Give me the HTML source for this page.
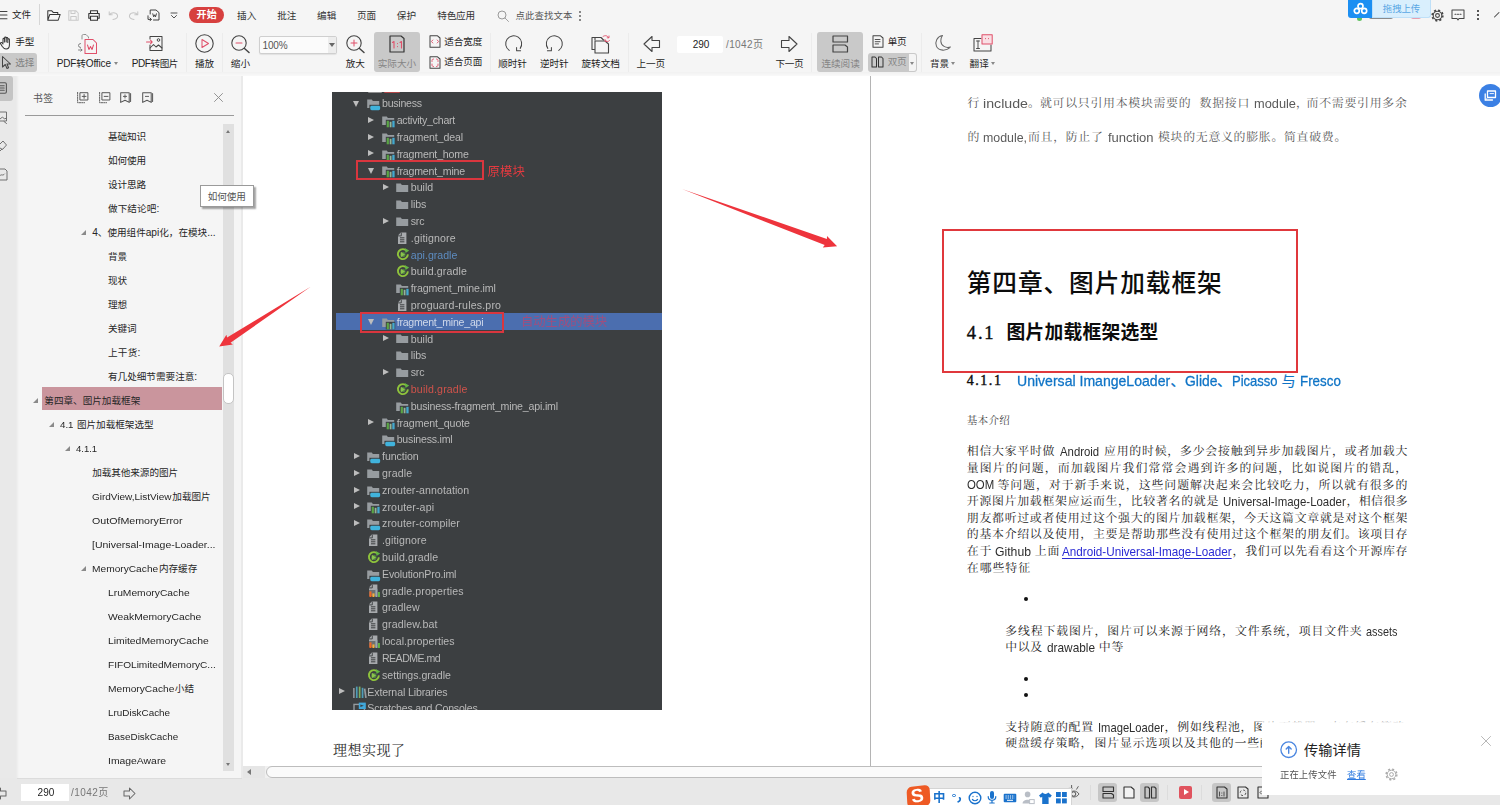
<!DOCTYPE html>
<html lang="zh-CN">
<head>
<meta charset="utf-8">
<title>Android PDF - 第四章、图片加载框架</title>
<style>
*{box-sizing:border-box;margin:0;padding:0;text-spacing-trim:space-all}
html,body{width:1500px;height:805px;overflow:hidden}
body{position:relative;background:#f5f5f5;font-family:"Liberation Sans","Noto Sans CJK SC",sans-serif;font-size:9.6px;color:#333}
.a{position:absolute;white-space:nowrap}
.t{position:absolute;white-space:nowrap;line-height:16px;height:16px}
svg{position:absolute;overflow:visible}
.tri{position:absolute;width:0;height:0;border-left:5px solid transparent;border-bottom:5px solid #8a8a8a}
.dn{position:absolute;width:0;height:0;border-left:2.5px solid transparent;border-right:2.5px solid transparent;border-top:3px solid #888}
.sep{position:absolute;width:1px;height:39px;top:33px;background:#ececec}
.ard{position:absolute;width:0;height:0;border-left:3.7px solid transparent;border-right:3.7px solid transparent;border-top:6.8px solid #bdbdbd}
.arr{position:absolute;width:0;height:0;border-top:3.6px solid transparent;border-bottom:3.6px solid transparent;border-left:6.6px solid #bdbdbd}
.ide{font-family:"Liberation Sans",sans-serif}
</style>
</head>
<body>
<div class="a" style="left:0;top:0;width:1500px;height:805px;filter:blur(.3px)">
<!-- ===== top menu row ===== -->
<div class="a" style="left:0px;top:0px;width:1500px;height:76px;background:#f5f5f5"></div>
<div class="a" style="left:0px;top:72px;width:1500px;height:4px;background:linear-gradient(#f1f1f1,#f9f9f9)"></div>
<svg style="left:0px;top:10px" width="8" height="12" viewBox="0 0 8 12"><path d="M0 1.4H7M0 5.1H7M0 8.8H7" fill="none" stroke="#444" stroke-width="1.01" stroke-linecap="round" stroke-linejoin="round"/></svg>
<div class="t" style="left:12px;top:7.3px;font-size:9.6px;color:#1e1e1e">文件</div>
<div class="a" style="left:39px;top:4px;width:1px;height:21px;background:#d6d6d6"></div>
<svg style="left:47px;top:10px" width="14" height="11" viewBox="0 0 14 11"><path d="M.8 10.2V.8H4.8L6.2 2.4H10.8V4.4M.8 10.2L2.8 4.4H13.2L11.2 10.2Z" fill="none" stroke="#333" stroke-width="1.01" stroke-linecap="round" stroke-linejoin="round"/></svg>
<svg style="left:68px;top:10px" width="11" height="11" viewBox="0 0 11 11"><path d="M.8 .8H8L10.2 3V10.2H.8ZM3 .8V3.6H7V.8M2.8 10.2V6.4H8.2V10.2" fill="none" stroke="#c9c9c9" stroke-width="1.01" stroke-linecap="round" stroke-linejoin="round"/></svg>
<svg style="left:88px;top:10px" width="12" height="11" viewBox="0 0 12 11"><path d="M2.5 3.5V.8H9.5V3.5M2.5 8.2H.8V3.5H11.2V8.2H9.5M2.5 6.2H9.5V10.2H2.5Z" fill="none" stroke="#333" stroke-width="1.1" stroke-linecap="round" stroke-linejoin="round"/></svg>
<svg style="left:108px;top:11px" width="11" height="9" viewBox="0 0 11 9"><path d="M1.2 .8V3.8H4.2M1.5 3.8C3 1.2 8 .8 9.5 4.2C10.2 6.6 8 8.4 5 8.4" fill="none" stroke="#c6c6c6" stroke-width="1.01" stroke-linecap="round" stroke-linejoin="round"/></svg>
<svg style="left:128px;top:11px" width="11" height="9" viewBox="0 0 11 9"><path d="M9.8 .8V3.8H6.8M9.5 3.8C8 1.2 3 .8 1.5 4.2C.8 6.6 3 8.4 6 8.4" fill="none" stroke="#c6c6c6" stroke-width="1.01" stroke-linecap="round" stroke-linejoin="round"/></svg>
<svg style="left:147px;top:9px" width="13" height="13" viewBox="0 0 13 13"><path d="M3.2 5V1H9L12 3.6V11H6.5M1 6.8V10.4H4M3 9L4.4 10.4L3 11.8M5.8 4.8L6.7 7.8L7.6 5.8L8.5 7.8L9.4 4.8" fill="none" stroke="#333" stroke-width="0.92" stroke-linecap="round" stroke-linejoin="round"/></svg>
<svg style="left:170px;top:12px" width="8" height="8" viewBox="0 0 8 8"><path d="M1 1H7M1.5 3.5L4 6L6.5 3.5" fill="none" stroke="#444" stroke-width="0.92" stroke-linecap="round" stroke-linejoin="round"/></svg>
<div class="a" style="left:189px;top:7px;width:35px;height:16px;border-radius:8px;background:#d7403f"></div>
<div class="t" style="left:196.6px;top:7.2px;font-size:10px;color:#fff;letter-spacing:0.1px;font-weight:bold">开始</div>
<div class="t" style="left:237px;top:8px;font-size:9.6px;color:#333;letter-spacing:0.06px">插入</div>
<div class="t" style="left:277.2px;top:8px;font-size:9.6px;color:#333">批注</div>
<div class="t" style="left:317.1px;top:8px;font-size:9.6px;color:#333">编辑</div>
<div class="t" style="left:357px;top:8px;font-size:9.6px;color:#333">页面</div>
<div class="t" style="left:396.8px;top:8px;font-size:9.6px;color:#333">保护</div>
<div class="t" style="left:437.2px;top:8px;font-size:9.6px;color:#333;letter-spacing:-0.14px">特色应用</div>
<svg style="left:497px;top:10px" width="13" height="13" viewBox="0 0 13 13"><circle cx="5" cy="5" r="4" fill="none" stroke="#999" stroke-width="1"/><path d="M8 8L11.5 11.5" fill="none" stroke="#999" stroke-width="0.92" stroke-linecap="round" stroke-linejoin="round"/></svg>
<div class="t" style="left:515.6px;top:8px;font-size:9.4px;color:#555;letter-spacing:0.09px">点此查找文本</div>
<div class="a" style="left:579px;top:11px;width:2px;height:2px;background:#888;box-shadow:0 4px 0 #888,0 8px 0 #888"></div>
<div class="a" style="left:1357px;top:16px;width:5px;height:5px;background:#5fc05f;border-radius:3px"></div>
<div class="a" style="left:1369px;top:15px;width:24px;height:4px;background:#8a8a8a;border-radius:2px"></div>
<div class="a" style="left:1411px;top:15px;width:10px;height:4px;background:#e7a0b0;border-radius:2px"></div>
<div class="a" style="left:1372px;top:0;width:59px;height:17.5px;background:#d9effd;border:1px solid #bfe0f8;border-top:0;border-radius:0 0 3px 0"></div>
<div class="t" style="left:1382.8px;top:0.6px;font-size:9.4px;color:#5aa7e4;letter-spacing:-0.03px">拖拽上传</div>
<div class="a" style="left:1348.2px;top:0;width:23.8px;height:18px;background:#1c8ff2;border-radius:0 0 0 3px"></div>
<svg style="left:1351.6px;top:1.8px" width="17" height="13" viewBox="0 0 17 13"><circle cx="8.5" cy="4.2" r="2.5" fill="none" stroke="#fff" stroke-width="1.7"/><circle cx="4.8" cy="8.8" r="2.5" fill="none" stroke="#fff" stroke-width="1.7"/><circle cx="12.2" cy="8.8" r="2.5" fill="none" stroke="#fff" stroke-width="1.7"/></svg>
<svg style="left:1431px;top:8.8px" width="13" height="13" viewBox="0 0 13 13"><circle cx="6.5" cy="6.5" r="1.9" fill="none" stroke="#444" stroke-width="1.1"/><circle cx="6.5" cy="6.5" r="4.3" fill="none" stroke="#444" stroke-width="1.1"/><circle cx="6.5" cy="6.5" r="5.4" fill="none" stroke="#444" stroke-width="1.5" stroke-dasharray="2.1 2.14"/></svg>
<svg style="left:1451px;top:9px" width="14" height="13" viewBox="0 0 14 13"><path d="M1 1H13V9.5H8L7 11L6 9.5H1Z" fill="none" stroke="#444" stroke-width="1.01" stroke-linecap="round" stroke-linejoin="round"/><path d="M4 5.3h1M6.5 5.3h1M9 5.3h1" fill="none" stroke="#444" stroke-width="1.1" stroke-linecap="round" stroke-linejoin="round"/></svg>
<div class="a" style="left:1477px;top:10px;width:2px;height:2px;background:#555;box-shadow:0 4px 0 #555,0 8px 0 #555"></div>
<svg style="left:1494px;top:12px" width="6" height="6" viewBox="0 0 6 6"><path d="M.5 5L5 .5" fill="none" stroke="#444" stroke-width="1.01" stroke-linecap="round" stroke-linejoin="round"/></svg>
<!-- ===== toolbar row ===== -->
<svg style="left:0px;top:36px" width="13" height="14" viewBox="0 0 13 14"><path d="M3 7V3.2C3 2 4.6 2 4.6 3.2V6M4.6 6V2C4.6 .8 6.2 .8 6.2 2V6M6.2 6V2.4C6.2 1.2 7.8 1.2 7.8 2.4V6.4M7.8 6.4V3.6C7.8 2.6 9.4 2.6 9.4 3.6V9C9.4 11.5 8 13 6 13C4 13 3.3 12 2.3 10.5L.6 7.8C0 6.8 1.4 6 2.2 7L3 8" fill="none" stroke="#333" stroke-width="1.01" stroke-linecap="round" stroke-linejoin="round"/></svg>
<div class="t" style="left:15.3px;top:34px;font-size:9.6px;color:#1e1e1e;letter-spacing:-0.09px">手型</div>
<div class="a" style="left:0px;top:53px;width:37px;height:19px;background:#c9c9c9;border-radius:0 3px 3px 0"></div>
<svg style="left:1px;top:55px" width="11" height="15" viewBox="0 0 11 15"><path d="M1.5 1.5V12L4.3 9.5L6 13.5L7.6 12.8L6 9H9.5Z" fill="none" stroke="#444" stroke-width="1.01" stroke-linecap="round" stroke-linejoin="round"/></svg>
<div class="t" style="left:15.3px;top:54.5px;font-size:9.6px;color:#828282;letter-spacing:-0.09px">选择</div>
<div class="sep" style="left:48px"></div>
<svg style="left:77px;top:34px" width="21" height="21" viewBox="0 0 21 21"><path d="M5 5V2C5 1 5.5 .5 6.5 .5H9L11.5 3V4" fill="none" stroke="#888" stroke-width="0.92" stroke-linecap="round" stroke-linejoin="round"/><path d="M3.5 9.5A2 2 0 1 0 3.5 13.5M1.5 16H5M3.8 14.8L5 16L3.8 17.2" fill="none" stroke="#777" stroke-width="0.92" stroke-linecap="round" stroke-linejoin="round"/><path d="M8 5.5H16L19.5 9V19.5H8Z" fill="none" stroke="#e0506a" stroke-width="1.01" stroke-linecap="round" stroke-linejoin="round"/><path d="M10.5 11L12 15.5L13.5 12.5L15 15.5L16.5 11" fill="none" stroke="#e0506a" stroke-width="1.01" stroke-linecap="round" stroke-linejoin="round"/></svg>
<div class="t" style="left:56.7px;top:55.7px;font-size:9.6px;color:#1e1e1e;letter-spacing:-0.14px"><span style="font-size:10px">PDF</span>转<span style="font-size:10px">Office</span></div>
<div class="dn" style="left:113.5px;top:62px"></div>
<svg style="left:146px;top:35px" width="18" height="17" viewBox="0 0 18 17"><path d="M4 4V1.5H16V15.5H4V10" fill="none" stroke="#444" stroke-width="1.01" stroke-linecap="round" stroke-linejoin="round"/><path d="M4 13L7.5 9.5L10 12L12.5 10L16 13" fill="none" stroke="#444" stroke-width="1.01" stroke-linecap="round" stroke-linejoin="round"/><circle cx="12.5" cy="5" r="1.3" fill="none" stroke="#444" stroke-width="1"/><path d="M.5 7H6M4.5 5.2L6.3 7L4.5 8.8" fill="none" stroke="#e0506a" stroke-width="1.01" stroke-linecap="round" stroke-linejoin="round"/></svg>
<div class="t" style="left:131.7px;top:55.7px;font-size:9.6px;color:#1e1e1e;letter-spacing:-0.41px"><span style="font-size:10px">PDF</span>转图片</div>
<div class="sep" style="left:186px"></div>
<svg style="left:195px;top:34px" width="19" height="19" viewBox="0 0 19 19"><circle cx="9.5" cy="9.5" r="8.7" fill="none" stroke="#444" stroke-width="1.1"/><path d="M7 5.5V13.5L13.5 9.5Z" fill="none" stroke="#e0506a" stroke-width="1.01" stroke-linecap="round" stroke-linejoin="round"/></svg>
<div class="t" style="left:195px;top:55.7px;font-size:9.6px;color:#1e1e1e;letter-spacing:-0.19px">播放</div>
<div class="sep" style="left:222px"></div>
<svg style="left:231px;top:35px" width="20" height="19" viewBox="0 0 20 19"><circle cx="8" cy="8" r="7.2" fill="none" stroke="#444" stroke-width="1.1"/><path d="M13.5 13.5L18 17.5" fill="none" stroke="#444" stroke-width="1.47" stroke-linecap="round" stroke-linejoin="round"/><path d="M5 8H11" fill="none" stroke="#e0506a" stroke-width="1.01" stroke-linecap="round" stroke-linejoin="round"/></svg>
<div class="t" style="left:230.8px;top:55.7px;font-size:9.6px;color:#1e1e1e">缩小</div>
<div class="a" style="left:259px;top:36px;width:78px;height:17.5px;background:#fbfbfb;border:1px solid #cfcfcf;border-radius:2px;box-shadow:0 1px 1px rgba(0,0,0,.08)"></div>
<div class="t" style="left:262.5px;top:37.6px;font-size:10px;color:#555;letter-spacing:-0.14px">100%</div>
<div class="a" style="left:327.5px;top:37px;width:8.5px;height:15.5px;background:#ededed"></div>
<div class="a" style="left:328.5px;top:43px;border-left:3px solid transparent;border-right:3px solid transparent;border-top:4px solid #666"></div>
<svg style="left:346px;top:35px" width="20" height="19" viewBox="0 0 20 19"><circle cx="8" cy="8" r="7.2" fill="none" stroke="#444" stroke-width="1.1"/><path d="M13.5 13.5L18 17.5" fill="none" stroke="#444" stroke-width="1.47" stroke-linecap="round" stroke-linejoin="round"/><path d="M5 8H11M8 5V11" fill="none" stroke="#e0506a" stroke-width="1.01" stroke-linecap="round" stroke-linejoin="round"/></svg>
<div class="t" style="left:345.7px;top:55.7px;font-size:9.6px;color:#1e1e1e;letter-spacing:-0.04px">放大</div>
<div class="a" style="left:374px;top:32px;width:46px;height:39.5px;background:#c9c9c9;border-radius:3px"></div>
<svg style="left:389px;top:35px" width="16" height="18" viewBox="0 0 16 18"><path d="M1 1H12L15 3.5V17H1Z" fill="none" stroke="#333" stroke-width="1.2" stroke-linecap="round" stroke-linejoin="round"/><path d="M3.5 7.5L5 6.5V13M11 7.5L12.5 6.5V13M8.5 8.5V8.6M8.5 11.5V11.6" fill="none" stroke="#e0506a" stroke-width="1.1" stroke-linecap="round" stroke-linejoin="round"/></svg>
<div class="t" style="left:377.8px;top:55.7px;font-size:9.6px;color:#858585;letter-spacing:-0.04px">实际大小</div>
<svg style="left:429px;top:35px" width="12" height="13" viewBox="0 0 12 13"><path d="M1 .8H8.5L11 3V12.2H1Z" fill="none" stroke="#444" stroke-width="1.01" stroke-linecap="round" stroke-linejoin="round"/><path d="M3.8 5L2.5 6.5L3.8 8M8.2 5L9.5 6.5L8.2 8" fill="none" stroke="#e0506a" stroke-width="0.92" stroke-linecap="round" stroke-linejoin="round"/></svg>
<div class="t" style="left:444.2px;top:33.5px;font-size:9.6px;color:#1e1e1e;letter-spacing:-0.09px">适合宽度</div>
<svg style="left:429px;top:56px" width="12" height="13" viewBox="0 0 12 13"><path d="M1 .8H8.5L11 3V12.2H1Z" fill="none" stroke="#444" stroke-width="1.01" stroke-linecap="round" stroke-linejoin="round"/><path d="M3 5.5V4.5C3 3.5 3.5 3 4.5 3M7.5 3C8.5 3 9 3.5 9 4.5V5.5M9 8V9C9 10 8.5 10.5 7.5 10.5M4.5 10.5C3.5 10.5 3 10 3 9V8" fill="none" stroke="#e0506a" stroke-width="0.92" stroke-linecap="round" stroke-linejoin="round"/></svg>
<div class="t" style="left:444.2px;top:54.3px;font-size:9.6px;color:#1e1e1e;letter-spacing:-0.09px">适合页面</div>
<div class="sep" style="left:490px"></div>
<svg style="left:503.6px;top:34.8px" width="19" height="19" viewBox="0 0 19 19"><path d="M5.2 15.4A8 8 0 1 1 16.2 13.4" fill="none" stroke="#444" stroke-width="1.01" stroke-linecap="round" stroke-linejoin="round"/><path d="M12.6 12.6V15.8H16.6" fill="none" stroke="#444" stroke-width="1.01" stroke-linecap="round" stroke-linejoin="round"/></svg>
<div class="t" style="left:498.3px;top:55.7px;font-size:9.6px;color:#1e1e1e;letter-spacing:-0.09px">顺时针</div>
<svg style="left:545px;top:34.8px" width="19" height="19" viewBox="0 0 19 19"><path d="M13.8 15.4A8 8 0 1 0 2.8 13.4" fill="none" stroke="#444" stroke-width="1.01" stroke-linecap="round" stroke-linejoin="round"/><path d="M6.4 12.6V15.8H2.4" fill="none" stroke="#444" stroke-width="1.01" stroke-linecap="round" stroke-linejoin="round"/></svg>
<div class="t" style="left:540px;top:55.7px;font-size:9.6px;color:#1e1e1e;letter-spacing:-0.13px">逆时针</div>
<svg style="left:591px;top:34px" width="20" height="20" viewBox="0 0 20 20"><path d="M4 6V3.5H10L12.5 6" fill="none" stroke="#444" stroke-width="1.1" stroke-linecap="round" stroke-linejoin="round"/><path d="M3.5 15.5H1V3.5H4" fill="none" stroke="#444" stroke-width="1.1" stroke-linecap="round" stroke-linejoin="round"/><path d="M4 7H14L17.5 10V19H4Z" fill="#f5f5f5" stroke="#444" stroke-width="1.1" stroke-linecap="round" stroke-linejoin="round"/><path d="M12 2.5C14 1 16.5 1.5 17.5 3.5M16.2 3.8H18V2M18.5 6.5C17.5 8 15.5 8 14.5 7M14 5.5V7.2H15.8" fill="none" stroke="#e0506a" stroke-width="0.92" stroke-linecap="round" stroke-linejoin="round"/></svg>
<div class="t" style="left:581.5px;top:55.7px;font-size:9.6px;color:#1e1e1e;letter-spacing:0.03px">旋转文档</div>
<div class="sep" style="left:628px"></div>
<svg style="left:643px;top:35px" width="18" height="18" viewBox="0 0 18 18"><path d="M1 9L9 1.5V5.5H16.5V12.5H9V16.5Z" fill="none" stroke="#444" stroke-width="1.1" stroke-linecap="round" stroke-linejoin="round"/></svg>
<div class="t" style="left:636.4px;top:55.7px;font-size:9.6px;color:#1e1e1e;letter-spacing:-0.06px">上一页</div>
<div class="a" style="left:677px;top:36px;width:46px;height:16.5px;background:#fff;border-radius:2px"></div>
<div class="t" style="left:692.8px;top:36.5px;font-size:10px;color:#222;letter-spacing:-0.1px">290</div>
<div class="t" style="left:726px;top:36.5px;font-size:10px;color:#777;letter-spacing:0.39px">/1042页</div>
<svg style="left:780px;top:35px" width="18" height="18" viewBox="0 0 18 18"><path d="M17 9L9 1.5V5.5H1.5V12.5H9V16.5Z" fill="none" stroke="#444" stroke-width="1.1" stroke-linecap="round" stroke-linejoin="round"/></svg>
<div class="t" style="left:775.5px;top:55.7px;font-size:9.6px;color:#1e1e1e;letter-spacing:-0.29px">下一页</div>
<div class="sep" style="left:811px"></div>
<div class="a" style="left:817px;top:32px;width:46px;height:39.5px;background:#c9c9c9;border-radius:3px"></div>
<svg style="left:832px;top:35px" width="17" height="18" viewBox="0 0 17 18"><path d="M1 1H15.5V7H1ZM1 10H13L15.5 12V17H1Z" fill="none" stroke="#444" stroke-width="1.2" stroke-linecap="round" stroke-linejoin="round"/></svg>
<div class="t" style="left:821.5px;top:55.7px;font-size:9.6px;color:#858585;letter-spacing:-0.04px">连续阅读</div>
<svg style="left:872px;top:35px" width="12" height="13" viewBox="0 0 12 13"><path d="M1 .8H8.5L11 3V12.2H1Z" fill="none" stroke="#444" stroke-width="1.01" stroke-linecap="round" stroke-linejoin="round"/><path d="M3.2 4.5H8M3.2 6.7H8M3.2 8.9H6.5" fill="none" stroke="#444" stroke-width="0.92" stroke-linecap="round" stroke-linejoin="round"/></svg>
<div class="t" style="left:887.7px;top:34px;font-size:9.6px;color:#1e1e1e;letter-spacing:-0.19px">单页</div>
<div class="a" style="left:868px;top:53px;width:49px;height:18.5px;background:#c9c9c9;border-radius:3px"></div>
<div class="a" style="left:908.5px;top:54px;width:7.5px;height:16.5px;background:#f4f4f4;border-radius:0 2px 2px 0"></div>
<div class="dn" style="left:910px;top:61.5px"></div>
<svg style="left:871px;top:56px" width="13" height="12" viewBox="0 0 13 12"><path d="M1 1H4L5.5 2.5V11H1ZM7.5 1H10.5L12 2.5V11H7.5Z" fill="none" stroke="#333" stroke-width="1.01" stroke-linecap="round" stroke-linejoin="round"/></svg>
<div class="t" style="left:887.7px;top:54.3px;font-size:9.6px;color:#858585;letter-spacing:-0.19px">双页</div>
<div class="sep" style="left:921px"></div>
<svg style="left:934px;top:34px" width="18" height="18" viewBox="0 0 18 18"><path d="M8.5 1.5C3 2.5 .5 8 2.5 12.5C5 17 12 17.5 16.5 13C12 14.5 7 12 6.8 7C6.7 4.5 7.5 2.8 8.5 1.5Z" fill="none" stroke="#666" stroke-width="1.01" stroke-linecap="round" stroke-linejoin="round"/></svg>
<div class="t" style="left:930px;top:55.7px;font-size:9.6px;color:#1e1e1e;letter-spacing:-0.19px">背景</div>
<div class="dn" style="left:951px;top:62px"></div>
<svg style="left:973px;top:34px" width="20" height="19" viewBox="0 0 20 19"><path d="M8 4.5H1V17H18V11" fill="none" stroke="#444" stroke-width="1.01" stroke-linecap="round" stroke-linejoin="round"/><path d="M3.5 7H6.5M5 7V14.5M3.5 14.5H6.5" fill="none" stroke="#444" stroke-width="0.92" stroke-linecap="round" stroke-linejoin="round"/><path d="M9 .8H19.2V10H9Z" fill="#f9dfe4" stroke="#e0506a" stroke-width="1.01" stroke-linecap="round" stroke-linejoin="round"/><path d="M12.5 4.5V4.6M15.5 4.5V4.6" fill="none" stroke="#e0506a" stroke-width="1.1" stroke-linecap="round" stroke-linejoin="round"/></svg>
<div class="t" style="left:969.6px;top:55.7px;font-size:9.6px;color:#1e1e1e;letter-spacing:-0.04px">翻译</div>
<div class="dn" style="left:991px;top:62px"></div>
<!-- ===== left strip + bookmark panel ===== -->
<div class="a" style="left:0px;top:76px;width:17px;height:702px;background:#e9e9e9"></div>
<div class="a" style="left:16px;top:76px;width:3px;height:702px;background:linear-gradient(90deg,#e9e9e9,#f5f5f5)"></div>
<div class="a" style="left:19px;top:76px;width:223px;height:702px;background:#f5f5f5"></div>
<div class="a" style="left:241px;top:76px;width:2px;height:702px;background:#eaeaea"></div>
<div class="a" style="left:0px;top:75.5px;width:13.4px;height:25.4px;background:#c4c4c4;border-radius:0 3px 3px 0"></div>
<svg style="left:0px;top:82px" width="8" height="12" viewBox="0 0 8 12"><path d="M0 .8H5C6 .8 6.4 1.2 6.4 2.2V9.8C6.4 10.8 6 11.2 5 11.2H0M0 3.8H4.2M0 6H4.2M0 8.2H4.2" fill="none" stroke="#555" stroke-width="1.1" stroke-linecap="round" stroke-linejoin="round"/></svg>
<svg style="left:0px;top:111px" width="8" height="13" viewBox="0 0 8 13"><path d="M0 1H6.5V10H0M0 8L2.5 6L4.5 8L6.5 7M4 10.5L6.5 12.5" fill="none" stroke="#666" stroke-width="0.92" stroke-linecap="round" stroke-linejoin="round"/></svg>
<svg style="left:0px;top:140px" width="8" height="12" viewBox="0 0 8 12"><path d="M0 4L3 1L6.5 5L2.5 9.5L0 8M0 11L2 9" fill="none" stroke="#666" stroke-width="0.92" stroke-linecap="round" stroke-linejoin="round"/></svg>
<svg style="left:0px;top:168px" width="8" height="13" viewBox="0 0 8 13"><path d="M0 1H5L7 3V12H0M0 7.5C1.5 5.5 2.5 8.5 4.5 6" fill="none" stroke="#666" stroke-width="0.92" stroke-linecap="round" stroke-linejoin="round"/></svg>
<div class="t" style="left:33.1px;top:91px;font-size:9.8px;color:#555;letter-spacing:0.35px">书签</div>
<svg style="left:77px;top:92px" width="12" height="12" viewBox="0 0 12 12"><path d="M.6 .4V10.7H7.6" fill="none" stroke="#555" stroke-width="0.92" stroke-linecap="round" stroke-linejoin="round" stroke-dasharray="1.3 1.1"/><path d="M3.3 .7H10.9V8H3.3ZM5.2 4.4H9M7.1 2.5V6.3" fill="none" stroke="#555" stroke-width="0.97" stroke-linecap="round" stroke-linejoin="round"/></svg>
<svg style="left:98.6px;top:92px" width="12" height="12" viewBox="0 0 12 12"><path d="M.6 .4V10.7H7.6" fill="none" stroke="#555" stroke-width="0.92" stroke-linecap="round" stroke-linejoin="round" stroke-dasharray="1.3 1.1"/><path d="M3.3 .7H10.9V8H3.3ZM5.2 4.4H9" fill="none" stroke="#555" stroke-width="0.97" stroke-linecap="round" stroke-linejoin="round"/></svg>
<svg style="left:120.2px;top:92.1px" width="12" height="12" viewBox="0 0 12 12"><path d="M.7 .8H9.2V10.4L5 8.2L.7 10.4ZM10.6 1.6V9.6" fill="none" stroke="#555" stroke-width="1.01" stroke-linecap="round" stroke-linejoin="round"/><path d="M3.4 4.4H6.6M5 2.8V6" fill="none" stroke="#555" stroke-width="0.92" stroke-linecap="round" stroke-linejoin="round"/></svg>
<svg style="left:142px;top:92.1px" width="12" height="12" viewBox="0 0 12 12"><path d="M.7 .8H9.2V10.4L5 8.2L.7 10.4ZM10.6 1.6V9.6" fill="none" stroke="#555" stroke-width="1.01" stroke-linecap="round" stroke-linejoin="round"/><path d="M3.4 4.4H6.6" fill="none" stroke="#555" stroke-width="0.92" stroke-linecap="round" stroke-linejoin="round"/></svg>
<svg style="left:214px;top:93px" width="9" height="9" viewBox="0 0 9 9"><path d="M.5 .5L8.5 8.5M8.5 .5L.5 8.5" fill="none" stroke="#8a8a8a" stroke-width="0.92" stroke-linecap="round" stroke-linejoin="round"/></svg>
<div class="a" style="left:25px;top:115px;width:209px;height:1px;background:#9a9a9a"></div>
<div class="a" style="left:223.2px;top:124px;width:10.8px;height:647px;background:#e0e0e0"></div>
<div class="a" style="left:226px;top:129.5px;border-left:2.5px solid transparent;border-right:2.5px solid transparent;border-bottom:3.5px solid #777"></div>
<div class="a" style="left:226px;top:762.5px;border-left:2.5px solid transparent;border-right:2.5px solid transparent;border-top:3.5px solid #777"></div>
<div class="a" style="left:223px;top:373px;width:11px;height:31px;background:#fff;border:1px solid #c4c4c4;border-radius:5px"></div>
<div class="a" style="left:41.6px;top:387.2px;width:180.4px;height:23px;background:#ca959d"></div>
<div class="t" style="left:108px;top:128.5px;font-size:9.6px;color:#262626;letter-spacing:-0.09px">基础知识</div>
<div class="t" style="left:108px;top:152.5px;font-size:9.6px;color:#262626;letter-spacing:-0.09px">如何使用</div>
<div class="t" style="left:108px;top:176.5px;font-size:9.6px;color:#262626;letter-spacing:-0.09px">设计思路</div>
<div class="t" style="left:108px;top:200.6px;font-size:9.6px;color:#262626;letter-spacing:0.08px">做下结论吧<span style="font-size:10.2px">:</span></div>
<div class="t" style="left:92.2px;top:224.6px;font-size:9.6px;color:#262626;letter-spacing:-0.02px"><span style="font-size:10.2px">4</span>、使用组件<span style="font-size:10.2px">api</span>化，在模块<span style="font-size:10.2px">...</span></div>
<div class="tri" style="left:81px;top:230px"></div>
<div class="t" style="left:108px;top:248.6px;font-size:9.6px;color:#262626;letter-spacing:-0.09px">背景</div>
<div class="t" style="left:108px;top:272.6px;font-size:9.6px;color:#262626;letter-spacing:-0.09px">现状</div>
<div class="t" style="left:108px;top:296.6px;font-size:9.6px;color:#262626;letter-spacing:-0.09px">理想</div>
<div class="t" style="left:108px;top:320.6px;font-size:9.6px;color:#262626;letter-spacing:-0.09px">关键词</div>
<div class="t" style="left:108px;top:344.6px;font-size:9.6px;color:#262626;letter-spacing:0.22px">上干货<span style="font-size:10.2px">:</span></div>
<div class="t" style="left:108px;top:368.6px;font-size:9.6px;color:#262626">有几处细节需要注意<span style="font-size:10.2px">:</span></div>
<div class="t" style="left:44.3px;top:392.5px;font-size:9.6px;color:#262626">第四章、图片加载框架</div>
<div class="tri" style="left:33.1px;top:397.9px"></div>
<div class="t" style="left:60.4px;top:416.5px;font-size:9.7px;color:#262626;transform:scaleX(1.002);transform-origin:0 50%">4.1</div>
<div class="t" style="left:76.9px;top:416.5px;font-size:9.6px;color:#262626">图片加载框架选型</div>
<div class="tri" style="left:49.2px;top:421.9px"></div>
<div class="t" style="left:76.2px;top:440.5px;font-size:9.7px;color:#262626;transform:scaleX(0.979);transform-origin:0 50%">4.1.1</div>
<div class="tri" style="left:65px;top:445.9px"></div>
<div class="t" style="left:92.3px;top:464.5px;font-size:9.6px;color:#262626;letter-spacing:-0.08px">加载其他来源的图片</div>
<div class="t" style="left:92.3px;top:488.5px;font-size:9.7px;color:#262626;transform:scaleX(1.031);transform-origin:0 50%">GirdView,ListView</div>
<div class="t" style="left:172.3px;top:488.5px;font-size:9.6px;color:#262626">加载图片</div>
<div class="t" style="left:92.3px;top:512.5px;font-size:9.7px;color:#262626;transform:scaleX(1.1);transform-origin:0 50%">OutOfMemoryError</div>
<div class="t" style="left:92.3px;top:536.5px;font-size:9.7px;color:#262626;transform:scaleX(1.082);transform-origin:0 50%">[Universal-Image-Loader...</div>
<div class="t" style="left:92.3px;top:560.5px;font-size:9.7px;color:#262626;transform:scaleX(1.051);transform-origin:0 50%">MemoryCache</div>
<div class="t" style="left:158.9px;top:560.5px;font-size:9.6px;color:#262626">内存缓存</div>
<div class="tri" style="left:81.1px;top:565.9px"></div>
<div class="t" style="left:108px;top:584.5px;font-size:9.7px;color:#262626;transform:scaleX(1.06);transform-origin:0 50%">LruMemoryCache</div>
<div class="t" style="left:108px;top:608.5px;font-size:9.7px;color:#262626;transform:scaleX(1.065);transform-origin:0 50%">WeakMemoryCache</div>
<div class="t" style="left:108px;top:632.5px;font-size:9.7px;color:#262626;transform:scaleX(1.069);transform-origin:0 50%">LimitedMemoryCache</div>
<div class="t" style="left:108px;top:656.5px;font-size:9.7px;color:#262626;transform:scaleX(1.043);transform-origin:0 50%">FIFOLimitedMemoryC...</div>
<div class="t" style="left:108px;top:680.5px;font-size:9.7px;color:#262626;transform:scaleX(1.054);transform-origin:0 50%">MemoryCache</div>
<div class="t" style="left:174.8px;top:680.5px;font-size:9.6px;color:#262626">小结</div>
<div class="t" style="left:108px;top:704.5px;font-size:9.7px;color:#262626;transform:scaleX(1.021);transform-origin:0 50%">LruDiskCache</div>
<div class="t" style="left:108px;top:728.5px;font-size:9.7px;color:#262626;transform:scaleX(1.019);transform-origin:0 50%">BaseDiskCache</div>
<div class="t" style="left:108px;top:752.5px;font-size:9.7px;color:#262626;transform:scaleX(1.072);transform-origin:0 50%">ImageAware</div>
<!-- ===== left page with IDE project tree ===== -->
<div class="a" style="left:243px;top:76px;width:627px;height:690px;background:#fff"></div>
<div class="a" style="left:332px;top:92px;width:330px;height:618px;background:#3c3f41"></div>
<div class="a ide" style="left:332px;top:92px;width:330px;height:618px;overflow:hidden;filter:blur(.45px)">
<div class="a" style="left:3.5px;top:221.2px;width:327px;height:17.3px;background:#4b6eaf"></div>
<div class="a" style="left:36px;top:-2px;width:14px;height:3.4px;background:#b0b0b0;border-radius:1px;opacity:.7"></div>
<div class="a" style="left:52px;top:-2px;width:16px;height:3.4px;background:#d04a4a;border-radius:1px;opacity:.8"></div>
<div class="ard" style="left:21.1px;top:8.7px"></div>
<svg style="left:35px;top:5.1px" width="14" height="13" viewBox="0 0 14 13"><path d="M.2 2.4H4.7L5.9 3.9H12.2V11.1H.2Z" fill="#979ca0"/><rect x="2.4" y="7.8" width="11" height="5.4" fill="#3c3f41"/><rect x="3.3" y="8.8" width="9.8" height="4.4" rx="1.4" fill="#40b3dc"/></svg>
<div class="t" style="left:50px;top:3.3px;font-size:10.6px;color:#b9b9b9;letter-spacing:-0.26px">business</div>
<div class="arr" style="left:36.1px;top:24.81px"></div>
<svg style="left:49.5px;top:21.91px" width="14" height="13" viewBox="0 0 14 13"><path d="M.2 2.4H4.7L5.9 3.9H12.2V11.1H.2Z" fill="#979ca0"/><rect x="3.8" y="5.8" width="9.4" height="7.6" fill="#3c3f41"/><rect x="4.7" y="6.8" width="2.2" height="6.5" fill="#5aa546"/><rect x="7.7" y="7.8" width="1.8" height="5.5" fill="#94b59a"/><rect x="10.3" y="6.8" width="2.3" height="6.5" fill="#43a9cf"/></svg>
<div class="t" style="left:64.7px;top:20.11px;font-size:10.6px;color:#b9b9b9;letter-spacing:-0.25px">activity_chart</div>
<div class="arr" style="left:36.1px;top:41.61px"></div>
<svg style="left:49.5px;top:38.71px" width="14" height="13" viewBox="0 0 14 13"><path d="M.2 2.4H4.7L5.9 3.9H12.2V11.1H.2Z" fill="#979ca0"/><rect x="3.8" y="5.8" width="9.4" height="7.6" fill="#3c3f41"/><rect x="4.7" y="6.8" width="2.2" height="6.5" fill="#5aa546"/><rect x="7.7" y="7.8" width="1.8" height="5.5" fill="#94b59a"/><rect x="10.3" y="6.8" width="2.3" height="6.5" fill="#43a9cf"/></svg>
<div class="t" style="left:64.7px;top:36.91px;font-size:10.6px;color:#b9b9b9;letter-spacing:-0.11px">fragment_deal</div>
<div class="arr" style="left:36.1px;top:58.42px"></div>
<svg style="left:49.5px;top:55.52px" width="14" height="13" viewBox="0 0 14 13"><path d="M.2 2.4H4.7L5.9 3.9H12.2V11.1H.2Z" fill="#979ca0"/><rect x="3.8" y="5.8" width="9.4" height="7.6" fill="#3c3f41"/><rect x="4.7" y="6.8" width="2.2" height="6.5" fill="#5aa546"/><rect x="7.7" y="7.8" width="1.8" height="5.5" fill="#94b59a"/><rect x="10.3" y="6.8" width="2.3" height="6.5" fill="#43a9cf"/></svg>
<div class="t" style="left:64.7px;top:53.72px;font-size:10.6px;color:#b9b9b9;letter-spacing:-0.17px">fragment_home</div>
<div class="ard" style="left:35.6px;top:75.92px"></div>
<svg style="left:49.5px;top:72.32px" width="14" height="13" viewBox="0 0 14 13"><path d="M.2 2.4H4.7L5.9 3.9H12.2V11.1H.2Z" fill="#979ca0"/><rect x="3.8" y="5.8" width="9.4" height="7.6" fill="#3c3f41"/><rect x="4.7" y="6.8" width="2.2" height="6.5" fill="#5aa546"/><rect x="7.7" y="7.8" width="1.8" height="5.5" fill="#94b59a"/><rect x="10.3" y="6.8" width="2.3" height="6.5" fill="#43a9cf"/></svg>
<div class="t" style="left:64.7px;top:70.52px;font-size:10.6px;color:#b9b9b9;letter-spacing:-0.18px">fragment_mine</div>
<div class="arr" style="left:50.6px;top:92.03px"></div>
<svg style="left:64px;top:89.13px" width="14" height="13" viewBox="0 0 14 13"><path d="M.2 2.4H4.7L5.9 3.9H12.2V11.1H.2Z" fill="#979ca0"/></svg>
<div class="t" style="left:78.8px;top:87.33px;font-size:10.6px;color:#b9b9b9;letter-spacing:0.02px">build</div>
<svg style="left:64px;top:105.94px" width="14" height="13" viewBox="0 0 14 13"><path d="M.2 2.4H4.7L5.9 3.9H12.2V11.1H.2Z" fill="#979ca0"/></svg>
<div class="t" style="left:78.8px;top:104.14px;font-size:10.6px;color:#b9b9b9;letter-spacing:-0.13px">libs</div>
<div class="arr" style="left:50.6px;top:125.64px"></div>
<svg style="left:64px;top:122.74px" width="14" height="13" viewBox="0 0 14 13"><path d="M.2 2.4H4.7L5.9 3.9H12.2V11.1H.2Z" fill="#979ca0"/></svg>
<div class="t" style="left:78.8px;top:120.94px;font-size:10.6px;color:#b9b9b9;letter-spacing:-0.24px">src</div>
<svg style="left:64px;top:139.55px" width="14" height="13" viewBox="0 0 14 13"><path d="M2 3.4L4.8 .6H10.4V12H2Z" fill="#a7aaad"/><path d="M4 5.8H8.4M4 7.8H8.4M4 9.8H8.4" stroke="#3c3f41" stroke-width="1"/><path d="M2 3.9H5.3V.6" fill="none" stroke="#3c3f41" stroke-width=".9"/></svg>
<div class="t" style="left:78.8px;top:137.75px;font-size:10.6px;color:#b9b9b9;letter-spacing:0.14px">.gitignore</div>
<svg style="left:64px;top:156.35px" width="14" height="13" viewBox="0 0 14 13"><path d="M10.9 3.1A5 5 0 1 0 11.9 6.4" fill="none" stroke="#8fc43c" stroke-width="1.9"/><path d="M9 .2L13.2 2.4L9.6 5Z" fill="#62b543"/><path d="M4.9 4L9 6.5L4.9 9Z" fill="#c9dc5a"/><circle cx="6.9" cy="6.5" r="2.6" fill="#62b543" opacity=".6"/></svg>
<div class="t" style="left:78.8px;top:154.55px;font-size:10.6px;color:#5d8cc0">api.gradle</div>
<svg style="left:64px;top:173.16px" width="14" height="13" viewBox="0 0 14 13"><path d="M10.9 3.1A5 5 0 1 0 11.9 6.4" fill="none" stroke="#8fc43c" stroke-width="1.9"/><path d="M9 .2L13.2 2.4L9.6 5Z" fill="#62b543"/><path d="M4.9 4L9 6.5L4.9 9Z" fill="#c9dc5a"/><circle cx="6.9" cy="6.5" r="2.6" fill="#62b543" opacity=".6"/></svg>
<div class="t" style="left:78.8px;top:171.36px;font-size:10.6px;color:#b9b9b9;letter-spacing:0.12px">build.gradle</div>
<svg style="left:64px;top:189.97px" width="14" height="13" viewBox="0 0 14 13"><path d="M.2 2.4H4.7L5.9 3.9H12.2V11.1H.2Z" fill="#979ca0"/><rect x="3.8" y="5.8" width="9.4" height="7.6" fill="#3c3f41"/><rect x="4.7" y="6.8" width="2.2" height="6.5" fill="#5aa546"/><rect x="7.7" y="7.8" width="1.8" height="5.5" fill="#94b59a"/><rect x="10.3" y="6.8" width="2.3" height="6.5" fill="#43a9cf"/></svg>
<div class="t" style="left:78.8px;top:188.17px;font-size:10.6px;color:#b9b9b9;letter-spacing:-0.13px">fragment_mine.iml</div>
<svg style="left:64px;top:206.77px" width="14" height="13" viewBox="0 0 14 13"><path d="M2 3.4L4.8 .6H10.4V12H2Z" fill="#a7aaad"/><path d="M4 5.8H8.4M4 7.8H8.4M4 9.8H8.4" stroke="#3c3f41" stroke-width="1"/><path d="M2 3.9H5.3V.6" fill="none" stroke="#3c3f41" stroke-width=".9"/></svg>
<div class="t" style="left:78.8px;top:204.97px;font-size:10.6px;color:#b9b9b9;letter-spacing:0.18px">proguard-rules.pro</div>
<div class="ard" style="left:35.6px;top:227.18px"></div>
<svg style="left:49.5px;top:223.58px" width="14" height="13" viewBox="0 0 14 13"><path d="M.2 2.4H4.7L5.9 3.9H12.2V11.1H.2Z" fill="#979ca0"/><rect x="3.8" y="5.8" width="9.4" height="7.6" fill="#3c3f41"/><rect x="4.7" y="6.8" width="2.2" height="6.5" fill="#5aa546"/><rect x="7.7" y="7.8" width="1.8" height="5.5" fill="#94b59a"/><rect x="10.3" y="6.8" width="2.3" height="6.5" fill="#43a9cf"/></svg>
<div class="t" style="left:64.7px;top:221.78px;font-size:10.6px;color:#cfd8ea;letter-spacing:-0.24px">fragment_mine_api</div>
<div class="arr" style="left:50.6px;top:243.28px"></div>
<svg style="left:64px;top:240.38px" width="14" height="13" viewBox="0 0 14 13"><path d="M.2 2.4H4.7L5.9 3.9H12.2V11.1H.2Z" fill="#979ca0"/></svg>
<div class="t" style="left:78.8px;top:238.58px;font-size:10.6px;color:#b9b9b9;letter-spacing:0.02px">build</div>
<svg style="left:64px;top:257.19px" width="14" height="13" viewBox="0 0 14 13"><path d="M.2 2.4H4.7L5.9 3.9H12.2V11.1H.2Z" fill="#979ca0"/></svg>
<div class="t" style="left:78.8px;top:255.39px;font-size:10.6px;color:#b9b9b9;letter-spacing:-0.13px">libs</div>
<div class="arr" style="left:50.6px;top:276.9px"></div>
<svg style="left:64px;top:274px" width="14" height="13" viewBox="0 0 14 13"><path d="M.2 2.4H4.7L5.9 3.9H12.2V11.1H.2Z" fill="#979ca0"/></svg>
<div class="t" style="left:78.8px;top:272.2px;font-size:10.6px;color:#b9b9b9;letter-spacing:-0.24px">src</div>
<svg style="left:64px;top:290.8px" width="14" height="13" viewBox="0 0 14 13"><path d="M10.9 3.1A5 5 0 1 0 11.9 6.4" fill="none" stroke="#8fc43c" stroke-width="1.9"/><path d="M9 .2L13.2 2.4L9.6 5Z" fill="#62b543"/><path d="M4.9 4L9 6.5L4.9 9Z" fill="#c9dc5a"/><circle cx="6.9" cy="6.5" r="2.6" fill="#62b543" opacity=".6"/></svg>
<div class="t" style="left:78.8px;top:289px;font-size:10.6px;color:#d0534b;letter-spacing:0.16px">build.gradle</div>
<svg style="left:64px;top:307.61px" width="14" height="13" viewBox="0 0 14 13"><path d="M.2 2.4H4.7L5.9 3.9H12.2V11.1H.2Z" fill="#979ca0"/><rect x="3.8" y="5.8" width="9.4" height="7.6" fill="#3c3f41"/><rect x="4.7" y="6.8" width="2.2" height="6.5" fill="#5aa546"/><rect x="7.7" y="7.8" width="1.8" height="5.5" fill="#94b59a"/><rect x="10.3" y="6.8" width="2.3" height="6.5" fill="#43a9cf"/></svg>
<div class="t" style="left:78.8px;top:305.81px;font-size:10.6px;color:#b9b9b9;letter-spacing:-0.18px">business-fragment_mine_api.iml</div>
<div class="arr" style="left:36.1px;top:327.31px"></div>
<svg style="left:49.5px;top:324.41px" width="14" height="13" viewBox="0 0 14 13"><path d="M.2 2.4H4.7L5.9 3.9H12.2V11.1H.2Z" fill="#979ca0"/><rect x="3.8" y="5.8" width="9.4" height="7.6" fill="#3c3f41"/><rect x="4.7" y="6.8" width="2.2" height="6.5" fill="#5aa546"/><rect x="7.7" y="7.8" width="1.8" height="5.5" fill="#94b59a"/><rect x="10.3" y="6.8" width="2.3" height="6.5" fill="#43a9cf"/></svg>
<div class="t" style="left:64.7px;top:322.61px;font-size:10.6px;color:#b9b9b9;letter-spacing:-0.07px">fragment_quote</div>
<svg style="left:49.5px;top:341.22px" width="14" height="13" viewBox="0 0 14 13"><path d="M.2 2.4H4.7L5.9 3.9H12.2V11.1H.2Z" fill="#979ca0"/><rect x="2.4" y="7.8" width="11" height="5.4" fill="#3c3f41"/><rect x="3.3" y="8.8" width="9.8" height="4.4" rx="1.4" fill="#40b3dc"/></svg>
<div class="t" style="left:64.7px;top:339.42px;font-size:10.6px;color:#b9b9b9;letter-spacing:-0.21px">business.iml</div>
<div class="arr" style="left:21.6px;top:360.93px"></div>
<svg style="left:35px;top:358.03px" width="14" height="13" viewBox="0 0 14 13"><path d="M.2 2.4H4.7L5.9 3.9H12.2V11.1H.2Z" fill="#979ca0"/><rect x="2.4" y="7.8" width="11" height="5.4" fill="#3c3f41"/><rect x="3.3" y="8.8" width="9.8" height="4.4" rx="1.4" fill="#40b3dc"/></svg>
<div class="t" style="left:50px;top:356.23px;font-size:10.6px;color:#b9b9b9;letter-spacing:-0.05px">function</div>
<div class="arr" style="left:21.6px;top:377.73px"></div>
<svg style="left:35px;top:374.83px" width="14" height="13" viewBox="0 0 14 13"><path d="M.2 2.4H4.7L5.9 3.9H12.2V11.1H.2Z" fill="#979ca0"/></svg>
<div class="t" style="left:50px;top:373.03px;font-size:10.6px;color:#b9b9b9;letter-spacing:0.12px">gradle</div>
<div class="arr" style="left:21.6px;top:394.54px"></div>
<svg style="left:35px;top:391.64px" width="14" height="13" viewBox="0 0 14 13"><path d="M.2 2.4H4.7L5.9 3.9H12.2V11.1H.2Z" fill="#979ca0"/><rect x="2.4" y="7.8" width="11" height="5.4" fill="#3c3f41"/><rect x="3.3" y="8.8" width="9.8" height="4.4" rx="1.4" fill="#40b3dc"/></svg>
<div class="t" style="left:50px;top:389.84px;font-size:10.6px;color:#b9b9b9;letter-spacing:0.07px">zrouter-annotation</div>
<div class="arr" style="left:21.6px;top:411.34px"></div>
<svg style="left:35px;top:408.44px" width="14" height="13" viewBox="0 0 14 13"><path d="M.2 2.4H4.7L5.9 3.9H12.2V11.1H.2Z" fill="#979ca0"/><rect x="3.8" y="5.8" width="9.4" height="7.6" fill="#3c3f41"/><rect x="4.7" y="6.8" width="2.2" height="6.5" fill="#5aa546"/><rect x="7.7" y="7.8" width="1.8" height="5.5" fill="#94b59a"/><rect x="10.3" y="6.8" width="2.3" height="6.5" fill="#43a9cf"/></svg>
<div class="t" style="left:50px;top:406.64px;font-size:10.6px;color:#b9b9b9;letter-spacing:0.14px">zrouter-api</div>
<div class="arr" style="left:21.6px;top:428.15px"></div>
<svg style="left:35px;top:425.25px" width="14" height="13" viewBox="0 0 14 13"><path d="M.2 2.4H4.7L5.9 3.9H12.2V11.1H.2Z" fill="#979ca0"/><rect x="2.4" y="7.8" width="11" height="5.4" fill="#3c3f41"/><rect x="3.3" y="8.8" width="9.8" height="4.4" rx="1.4" fill="#40b3dc"/></svg>
<div class="t" style="left:50px;top:423.45px;font-size:10.6px;color:#b9b9b9;letter-spacing:0.09px">zrouter-compiler</div>
<svg style="left:35px;top:442.06px" width="14" height="13" viewBox="0 0 14 13"><path d="M2 3.4L4.8 .6H10.4V12H2Z" fill="#a7aaad"/><path d="M4 5.8H8.4M4 7.8H8.4M4 9.8H8.4" stroke="#3c3f41" stroke-width="1"/><path d="M2 3.9H5.3V.6" fill="none" stroke="#3c3f41" stroke-width=".9"/></svg>
<div class="t" style="left:50px;top:440.26px;font-size:10.6px;color:#b9b9b9;letter-spacing:0.11px">.gitignore</div>
<svg style="left:35px;top:458.86px" width="14" height="13" viewBox="0 0 14 13"><path d="M10.9 3.1A5 5 0 1 0 11.9 6.4" fill="none" stroke="#8fc43c" stroke-width="1.9"/><path d="M9 .2L13.2 2.4L9.6 5Z" fill="#62b543"/><path d="M4.9 4L9 6.5L4.9 9Z" fill="#c9dc5a"/><circle cx="6.9" cy="6.5" r="2.6" fill="#62b543" opacity=".6"/></svg>
<div class="t" style="left:50px;top:457.06px;font-size:10.6px;color:#b9b9b9;letter-spacing:0.13px">build.gradle</div>
<svg style="left:35px;top:475.67px" width="14" height="13" viewBox="0 0 14 13"><path d="M.2 2.4H4.7L5.9 3.9H12.2V11.1H.2Z" fill="#979ca0"/><rect x="2.4" y="7.8" width="11" height="5.4" fill="#3c3f41"/><rect x="3.3" y="8.8" width="9.8" height="4.4" rx="1.4" fill="#40b3dc"/></svg>
<div class="t" style="left:50px;top:473.87px;font-size:10.6px;color:#b9b9b9;letter-spacing:-0.14px">EvolutionPro.iml</div>
<svg style="left:35px;top:492.47px" width="14" height="13" viewBox="0 0 14 13"><path d="M2 3.4L4.8 .6H10.4V12H2Z" fill="#a7aaad"/><path d="M2 3.9H5.3V.6" fill="none" stroke="#3c3f41" stroke-width=".9"/><rect x="1.6" y="6" width="11" height="7" fill="#3c3f41" opacity=".55"/><rect x="2.4" y="7.4" width="2.1" height="5.6" fill="#f26522"/><rect x="5.4" y="9.4" width="2.1" height="3.6" fill="#f4af3d"/><rect x="8.4" y="5.4" width="2.1" height="7.6" fill="#9aa7b0"/><rect x="11" y="8" width="1.9" height="5" fill="#62b543"/></svg>
<div class="t" style="left:50px;top:490.67px;font-size:10.6px;color:#b9b9b9;letter-spacing:0.13px">gradle.properties</div>
<svg style="left:35px;top:509.28px" width="14" height="13" viewBox="0 0 14 13"><path d="M2 3.4L4.8 .6H10.4V12H2Z" fill="#a7aaad"/><path d="M4 5.8H8.4M4 7.8H8.4M4 9.8H8.4" stroke="#3c3f41" stroke-width="1"/><path d="M2 3.9H5.3V.6" fill="none" stroke="#3c3f41" stroke-width=".9"/></svg>
<div class="t" style="left:50px;top:507.48px;font-size:10.6px;color:#b9b9b9;letter-spacing:0.08px">gradlew</div>
<svg style="left:35px;top:526.09px" width="14" height="13" viewBox="0 0 14 13"><path d="M2 3.4L4.8 .6H10.4V12H2Z" fill="#a7aaad"/><path d="M4 5.8H8.4M4 7.8H8.4M4 9.8H8.4" stroke="#3c3f41" stroke-width="1"/><path d="M2 3.9H5.3V.6" fill="none" stroke="#3c3f41" stroke-width=".9"/></svg>
<div class="t" style="left:50px;top:524.29px;font-size:10.6px;color:#b9b9b9;letter-spacing:0.12px">gradlew.bat</div>
<svg style="left:35px;top:542.89px" width="14" height="13" viewBox="0 0 14 13"><path d="M2 3.4L4.8 .6H10.4V12H2Z" fill="#a7aaad"/><path d="M2 3.9H5.3V.6" fill="none" stroke="#3c3f41" stroke-width=".9"/><rect x="1.6" y="6" width="11" height="7" fill="#3c3f41" opacity=".55"/><rect x="2.4" y="7.4" width="2.1" height="5.6" fill="#f26522"/><rect x="5.4" y="9.4" width="2.1" height="3.6" fill="#f4af3d"/><rect x="8.4" y="5.4" width="2.1" height="7.6" fill="#9aa7b0"/><rect x="11" y="8" width="1.9" height="5" fill="#62b543"/></svg>
<div class="t" style="left:50px;top:541.09px;font-size:10.6px;color:#b9b9b9;letter-spacing:0.05px">local.properties</div>
<svg style="left:35px;top:559.7px" width="14" height="13" viewBox="0 0 14 13"><path d="M2 3.4L4.8 .6H10.4V12H2Z" fill="#a7aaad"/><path d="M4 5.8H8.4M4 7.8H8.4M4 9.8H8.4" stroke="#3c3f41" stroke-width="1"/><path d="M2 3.9H5.3V.6" fill="none" stroke="#3c3f41" stroke-width=".9"/></svg>
<div class="t" style="left:50px;top:557.9px;font-size:10.6px;color:#b9b9b9;letter-spacing:-0.55px">README.md</div>
<svg style="left:35px;top:576.5px" width="14" height="13" viewBox="0 0 14 13"><path d="M10.9 3.1A5 5 0 1 0 11.9 6.4" fill="none" stroke="#8fc43c" stroke-width="1.9"/><path d="M9 .2L13.2 2.4L9.6 5Z" fill="#62b543"/><path d="M4.9 4L9 6.5L4.9 9Z" fill="#c9dc5a"/><circle cx="6.9" cy="6.5" r="2.6" fill="#62b543" opacity=".6"/></svg>
<div class="t" style="left:50px;top:574.7px;font-size:10.6px;color:#b9b9b9">settings.gradle</div>
<div class="arr" style="left:7.4px;top:596.21px"></div>
<svg style="left:20.6px;top:593.31px" width="14" height="13" viewBox="0 0 14 13"><rect x="0" y="3" width="1.7" height="10" fill="#8a9094"/><rect x="2.9" y="1.6" width="1.7" height="11.4" fill="#4f9db8"/><rect x="5.8" y="1.6" width="1.7" height="11.4" fill="#7fae62"/><rect x="8.7" y="2.8" width="1.7" height="10.2" fill="#4f9db8"/><rect x="11.4" y="3.6" width="1.7" height="9.4" fill="#959a9e" transform="rotate(-8 12 8)"/></svg>
<div class="t" style="left:35.3px;top:591.51px;font-size:10.6px;color:#b9b9b9;letter-spacing:-0.13px">External Libraries</div>
<svg style="left:20.6px;top:610.12px" width="14" height="13" viewBox="0 0 14 13"><rect x="1" y="2.4" width="10.4" height="10" fill="none" stroke="#959a9e" stroke-width="1.4"/><rect x="5.8" y=".6" width="7" height="6.4" fill="#40a8dc"/><path d="M7.4 2.6L10.8 3.8L7.4 5Z" fill="#3c3f41"/></svg>
<div class="t" style="left:35.3px;top:608.32px;font-size:10.6px;color:#b9b9b9;letter-spacing:-0.21px">Scratches and Consoles</div>
<div class="a" style="left:24.3px;top:68.3px;width:128px;height:20px;border:2px solid #d9363e"></div>
<div class="t" style="left:155.5px;top:71.6px;font-size:12.4px;color:#e23a40;letter-spacing:0.11px;font-family:'Liberation Sans','Noto Sans CJK SC',sans-serif">原模块</div>
<div class="a" style="left:27.6px;top:220.4px;width:144px;height:20.4px;border:2px solid #d9363e"></div>
<div class="t" style="left:189px;top:221.6px;font-size:12.3px;color:#c2426a;font-family:'Liberation Sans','Noto Sans CJK SC',sans-serif;opacity:.72">自动生成的模块</div>
</div>
<div class="t" style="left:333px;top:740.4px;font-size:14.1px;color:#333;line-height:20px;height:20px;letter-spacing:0.37px;font-family:'Liberation Serif','Noto Serif CJK SC',serif">理想实现了</div>
<!-- ===== right page ===== -->
<div class="a" style="left:870px;top:76px;width:630px;height:690px;background:#fff"></div>
<div class="a" style="left:870px;top:76px;width:1px;height:690px;background:#b4b4b4"></div>
<div class="t" style="left:967.6px;top:94.9px;font-size:11.9px;color:#5a5a5a;line-height:17px;height:17px;letter-spacing:0.69px;font-family:'Liberation Sans','Noto Serif CJK SC',serif">行</div>
<div class="t" style="left:983px;top:94.7px;font-size:13.4px;color:#5a5a5a;line-height:17px;height:17px;transform:scaleX(1.06);transform-origin:0 50%">include</div>
<div class="t" style="left:1028px;top:94.9px;font-size:11.9px;color:#5a5a5a;line-height:17px;height:17px;font-family:'Liberation Sans','Noto Serif CJK SC',serif">。</div>
<div class="t" style="left:1040px;top:94.9px;font-size:11.9px;color:#5a5a5a;line-height:17px;height:17px;letter-spacing:0.72px;font-family:'Liberation Sans','Noto Serif CJK SC',serif">就可以只引用本模块需要的</div>
<div class="t" style="left:1199.6px;top:94.9px;font-size:11.9px;color:#5a5a5a;line-height:17px;height:17px;letter-spacing:0.71px;font-family:'Liberation Sans','Noto Serif CJK SC',serif">数据接口</div>
<div class="t" style="left:1254px;top:94.7px;font-size:13.4px;color:#5a5a5a;line-height:17px;height:17px;transform:scaleX(0.956);transform-origin:0 50%">module</div>
<div class="t" style="left:1296px;top:94.9px;font-size:11.9px;color:#5a5a5a;line-height:17px;height:17px;font-family:'Liberation Sans','Noto Serif CJK SC',serif">，</div>
<div class="t" style="left:1306.6px;top:94.9px;font-size:11.9px;color:#5a5a5a;line-height:17px;height:17px;letter-spacing:0.73px;font-family:'Liberation Sans','Noto Serif CJK SC',serif">而不需要引用多余</div>
<div class="t" style="left:967.6px;top:128.9px;font-size:11.9px;color:#5a5a5a;line-height:17px;height:17px;letter-spacing:0.69px;font-family:'Liberation Sans','Noto Serif CJK SC',serif">的</div>
<div class="t" style="left:983px;top:128.7px;font-size:13.4px;color:#5a5a5a;line-height:17px;height:17px;transform:scaleX(0.924);transform-origin:0 50%">module,</div>
<div class="t" style="left:1028px;top:128.9px;font-size:11.9px;color:#5a5a5a;line-height:17px;height:17px;letter-spacing:0.69px;font-family:'Liberation Sans','Noto Serif CJK SC',serif">而且，防止了</div>
<div class="t" style="left:1108px;top:128.7px;font-size:13.4px;color:#5a5a5a;line-height:17px;height:17px;transform:scaleX(0.972);transform-origin:0 50%">function</div>
<div class="t" style="left:1158px;top:128.9px;font-size:11.9px;color:#5a5a5a;line-height:17px;height:17px;letter-spacing:0.71px;font-family:'Liberation Sans','Noto Serif CJK SC',serif">模块的无意义的膨胀。简直破费。</div>
<div class="a" style="left:942px;top:228.6px;width:356.4px;height:144px;border:2px solid #e0383c"></div>
<div class="t" style="left:966.8px;top:266px;font-size:24.7px;color:#0c0c0c;line-height:36px;height:36px;letter-spacing:0.89px;font-family:'Liberation Sans','Noto Sans CJK SC',sans-serif;font-weight:500">第四章、图片加载框架</div>
<div class="t" style="left:966.8px;top:318.6px;font-size:18.5px;color:#0c0c0c;line-height:28px;height:28px;letter-spacing:1.83px;font-family:'Liberation Serif','Noto Serif CJK SC',serif;-webkit-text-stroke:.4px #0c0c0c">4.1</div>
<div class="t" style="left:1006.6px;top:318.8px;font-size:18.8px;color:#0c0c0c;line-height:28px;height:28px;letter-spacing:0.22px;font-family:'Liberation Sans','Noto Sans CJK SC',sans-serif;font-weight:700">图片加载框架选型</div>
<div class="t" style="left:966.8px;top:371.2px;font-size:14px;color:#0c0c0c;line-height:20px;height:20px;letter-spacing:1.52px;font-family:'Liberation Serif','Noto Serif CJK SC',serif;-webkit-text-stroke:.4px #0c0c0c">4.1.1</div>
<div class="t" style="left:1017.2px;top:371px;font-size:15px;color:#0f74c6;line-height:20px;height:20px;transform:scaleX(0.937);transform-origin:0 50%;-webkit-text-stroke:.3px #0f74c6">Universal ImangeLoader</div>
<div class="t" style="left:1170.4px;top:371px;font-size:14px;color:#0f74c6;line-height:20px;height:20px;-webkit-text-stroke:.3px #0f74c6">、</div>
<div class="t" style="left:1184.6px;top:371px;font-size:15px;color:#0f74c6;line-height:20px;height:20px;transform:scaleX(0.925);transform-origin:0 50%;-webkit-text-stroke:.3px #0f74c6">Glide</div>
<div class="t" style="left:1217px;top:371px;font-size:14px;color:#0f74c6;line-height:20px;height:20px;-webkit-text-stroke:.3px #0f74c6">、</div>
<div class="t" style="left:1232px;top:371px;font-size:15px;color:#0f74c6;line-height:20px;height:20px;transform:scaleX(0.868);transform-origin:0 50%;-webkit-text-stroke:.3px #0f74c6">Picasso</div>
<div class="t" style="left:1281.6px;top:371px;font-size:14px;color:#0f74c6;line-height:20px;height:20px;letter-spacing:-0.6px;-webkit-text-stroke:.2px #0f74c6">与</div>
<div class="t" style="left:1299.6px;top:371px;font-size:15px;color:#0f74c6;line-height:20px;height:20px;transform:scaleX(0.89);transform-origin:0 50%;-webkit-text-stroke:.3px #0f74c6">Fresco</div>
<div class="t" style="left:966.8px;top:411.9px;font-size:10.6px;color:#444;line-height:17px;height:17px;letter-spacing:0.21px;font-family:'Liberation Sans','Noto Serif CJK SC',serif">基本介绍</div>
<div class="t" style="left:966.8px;top:443.3px;font-size:11.9px;color:#242424;line-height:17px;height:17px;letter-spacing:0.74px;font-family:'Liberation Sans','Noto Serif CJK SC',serif">相信大家平时做</div>
<div class="t" style="left:1060px;top:443.1px;font-size:13.1px;color:#2e2e2e;line-height:17px;height:17px;transform:scaleX(0.868);transform-origin:0 50%">Android</div>
<div class="t" style="left:1104px;top:443.3px;font-size:11.9px;color:#242424;line-height:17px;height:17px;letter-spacing:0.78px;font-family:'Liberation Sans','Noto Serif CJK SC',serif">应用的时候，多少会接触到异步加载图片，或者加载大</div>
<div class="t" style="left:966.8px;top:459.9px;font-size:11.9px;color:#242424;line-height:17px;height:17px;letter-spacing:1.09px;font-family:'Liberation Sans','Noto Serif CJK SC',serif">量图片的问题，而加载图片我们常常会遇到许多的问题，比如说图片的错乱，</div>
<div class="t" style="left:966.8px;top:476.3px;font-size:13.1px;color:#2e2e2e;line-height:17px;height:17px;transform:scaleX(0.87);transform-origin:0 50%">OOM</div>
<div class="t" style="left:997.4px;top:476.5px;font-size:11.9px;color:#242424;line-height:17px;height:17px;letter-spacing:0.95px;font-family:'Liberation Sans','Noto Serif CJK SC',serif">等问题，对于新手来说，这些问题解决起来会比较吃力，所以就有很多的</div>
<div class="t" style="left:966.8px;top:493.1px;font-size:11.9px;color:#242424;line-height:17px;height:17px;letter-spacing:0.72px;font-family:'Liberation Sans','Noto Serif CJK SC',serif">开源图片加载框架应运而生，比较著名的就是</div>
<div class="t" style="left:1223.2px;top:492.9px;font-size:13.1px;color:#2e2e2e;line-height:17px;height:17px;transform:scaleX(0.874);transform-origin:0 50%">Universal-Image-Loader</div>
<div class="t" style="left:1346.4px;top:493.1px;font-size:11.9px;color:#242424;line-height:17px;height:17px;letter-spacing:0.47px;font-family:'Liberation Sans','Noto Serif CJK SC',serif">，相信很多</div>
<div class="t" style="left:966.8px;top:509.7px;font-size:11.9px;color:#242424;line-height:17px;height:17px;letter-spacing:0.72px;font-family:'Liberation Sans','Noto Serif CJK SC',serif">朋友都听过或者使用过这个强大的图片加载框架，今天这篇文章就是对这个框架</div>
<div class="t" style="left:966.8px;top:526.3px;font-size:11.9px;color:#242424;line-height:17px;height:17px;letter-spacing:0.72px;font-family:'Liberation Sans','Noto Serif CJK SC',serif">的基本介绍以及使用，主要是帮助那些没有使用过这个框架的朋友们。该项目存</div>
<div class="t" style="left:966.8px;top:542.9px;font-size:11.9px;color:#242424;line-height:17px;height:17px;letter-spacing:0.7px;font-family:'Liberation Sans','Noto Serif CJK SC',serif">在于</div>
<div class="t" style="left:995.2px;top:542.7px;font-size:13.1px;color:#2e2e2e;line-height:17px;height:17px;transform:scaleX(0.933);transform-origin:0 50%">Github</div>
<div class="t" style="left:1034.8px;top:542.9px;font-size:11.9px;color:#242424;line-height:17px;height:17px;letter-spacing:0.7px;font-family:'Liberation Sans','Noto Serif CJK SC',serif">上面</div>
<div class="t" style="left:1062.4px;top:542.7px;font-size:13.1px;color:#2a2ad4;line-height:17px;height:17px;transform:scaleX(0.893);transform-origin:0 50%;text-decoration:underline;text-decoration-thickness:1px;text-underline-offset:1.5px">Android-Universal-Image-Loader</div>
<div class="t" style="left:1232.6px;top:542.9px;font-size:11.9px;color:#242424;line-height:17px;height:17px;letter-spacing:0.65px;font-family:'Liberation Sans','Noto Serif CJK SC',serif">，我们可以先看看这个开源库存</div>
<div class="t" style="left:966.8px;top:559.5px;font-size:11.9px;color:#242424;line-height:17px;height:17px;letter-spacing:0.95px;font-family:'Liberation Sans','Noto Serif CJK SC',serif">在哪些特征</div>
<div class="a" style="left:1024.4px;top:596.8px;width:4px;height:4px;background:#111;border-radius:2px"></div>
<div class="a" style="left:1024.4px;top:676.6px;width:4px;height:4px;background:#111;border-radius:2px"></div>
<div class="a" style="left:1024.4px;top:693.2px;width:4px;height:4px;background:#111;border-radius:2px"></div>
<div class="t" style="left:1005.2px;top:622.9px;font-size:11.9px;color:#242424;line-height:17px;height:17px;letter-spacing:0.87px;font-family:'Liberation Sans','Noto Serif CJK SC',serif">多线程下载图片，图片可以来源于网络，文件系统，项目文件夹</div>
<div class="t" style="left:1366px;top:622.7px;font-size:13.1px;color:#2e2e2e;line-height:17px;height:17px;transform:scaleX(0.83);transform-origin:0 50%">assets</div>
<div class="t" style="left:1005.2px;top:639.3px;font-size:11.9px;color:#242424;line-height:17px;height:17px;letter-spacing:0.7px;font-family:'Liberation Sans','Noto Serif CJK SC',serif">中以及</div>
<div class="t" style="left:1046.8px;top:639.1px;font-size:13.1px;color:#2e2e2e;line-height:17px;height:17px;transform:scaleX(0.903);transform-origin:0 50%">drawable</div>
<div class="t" style="left:1098.8px;top:639.3px;font-size:11.9px;color:#242424;line-height:17px;height:17px;letter-spacing:0.7px;font-family:'Liberation Sans','Noto Serif CJK SC',serif">中等</div>
<div class="t" style="left:1005.2px;top:718.7px;font-size:11.9px;color:#242424;line-height:17px;height:17px;letter-spacing:0.79px;font-family:'Liberation Sans','Noto Serif CJK SC',serif">支持随意的配置</div>
<div class="t" style="left:1098px;top:718.5px;font-size:13.1px;color:#2e2e2e;line-height:17px;height:17px;transform:scaleX(0.855);transform-origin:0 50%">ImageLoader</div>
<div class="t" style="left:1164.6px;top:718.7px;font-size:11.9px;color:#242424;line-height:17px;height:17px;letter-spacing:0.78px;font-family:'Liberation Sans','Noto Serif CJK SC',serif">，例如线程池，图片下载器，内存缓存策略，</div>
<div class="t" style="left:1005.2px;top:735.3px;font-size:11.9px;color:#242424;line-height:17px;height:17px;letter-spacing:0.68px;font-family:'Liberation Sans','Noto Serif CJK SC',serif">硬盘缓存策略，</div>
<div class="t" style="left:1094.6px;top:735.3px;font-size:11.9px;color:#242424;line-height:17px;height:17px;letter-spacing:0.83px;font-family:'Liberation Sans','Noto Serif CJK SC',serif">图片显示选项以及其他的一些配置</div>
<div class="a" style="left:1479px;top:83.6px;width:23px;height:23px;border-radius:12px;background:#3b80e4"></div>
<svg style="left:1484px;top:89.5px" width="13" height="12" viewBox="0 0 13 12"><path d="M3.5 1H11.5V7.5H3.5ZM1.2 4V10H8.5" fill="none" stroke="#fff" stroke-width="1.29" stroke-linecap="round" stroke-linejoin="round"/><path d="M1.2 10L3 8.6M6 3.6H9.5" fill="none" stroke="#fff" stroke-width="0.92" stroke-linecap="round" stroke-linejoin="round"/></svg>
<!-- ===== horizontal scrollbar ===== -->
<div class="a" style="left:243px;top:766px;width:1257px;height:12px;background:#f0f0f0"></div>
<div class="a" style="left:243px;top:766px;width:22px;height:12px;background:#e6e6e6"></div>
<div class="a" style="left:247px;top:769px;border-top:3px solid transparent;border-bottom:3px solid transparent;border-right:4px solid #777"></div>
<div class="a" style="left:266px;top:766.4px;width:1226px;height:11.2px;background:#fafafa;border:1px solid #bdbdbd;border-radius:6px"></div>
<!-- ===== status bar ===== -->
<div class="a" style="left:0px;top:777.5px;width:1500px;height:27.5px;background:#e8e8e8"></div>
<div class="a" style="left:17px;top:777.6px;width:225px;height:1px;background:#dcdcdc"></div>
<svg style="left:-6px;top:787px" width="13" height="13" viewBox="0 0 13 13"><path d="M1 6.5L6.5 1V4H12V9H6.5V12Z" fill="none" stroke="#666" stroke-width="1.01" stroke-linecap="round" stroke-linejoin="round"/></svg>
<div class="a" style="left:21.4px;top:784px;width:47.6px;height:16.8px;background:#fff"></div>
<div class="t" style="left:37.6px;top:784.8px;font-size:10px;color:#222;letter-spacing:-0.03px">290</div>
<div class="t" style="left:71px;top:784.8px;font-size:10px;color:#777;letter-spacing:0.43px">/1042页</div>
<svg style="left:123px;top:787px" width="13" height="13" viewBox="0 0 13 13"><path d="M12 6.5L6.5 1V4H1V9H6.5V12Z" fill="none" stroke="#666" stroke-width="1.01" stroke-linecap="round" stroke-linejoin="round"/></svg>
<svg style="left:1069.4px;top:785.4px" width="11" height="14" viewBox="0 0 11 14"><path d="M0 9C2.4 5 7.4 5 10 9C7.4 13 2.4 13 0 9M9.2 1.6L7.6 4.2M2.6 .4V4.2M.2 3.4H3" fill="none" stroke="#555" stroke-width="0.92" stroke-linecap="round" stroke-linejoin="round"/><circle cx="4.6" cy="9" r="2.2" fill="none" stroke="#555" stroke-width="1"/></svg>
<div class="a" style="left:1090px;top:785px;width:1px;height:15px;background:#dcdcdc"></div>
<div class="a" style="left:1166.5px;top:785px;width:1px;height:15px;background:#dcdcdc"></div>
<div class="a" style="left:1201px;top:785px;width:1px;height:15px;background:#dcdcdc"></div>
<div class="a" style="left:1098px;top:782.7px;width:19px;height:19px;background:#c6c6c6;border-radius:3px"></div>
<svg style="left:1101.5px;top:785.6px" width="13" height="13" viewBox="0 0 13 13"><path d="M1 1H11.5V5.5H1ZM1 7.5H9.5L11.5 9V12H1Z" fill="none" stroke="#333" stroke-width="1.1" stroke-linecap="round" stroke-linejoin="round"/></svg>
<svg style="left:1123px;top:785.6px" width="12" height="13" viewBox="0 0 12 13"><path d="M1 1H8L11 3.5V12H1Z" fill="#f2f2f2" stroke="#333" stroke-width="1.1" stroke-linecap="round" stroke-linejoin="round"/></svg>
<div class="a" style="left:1140px;top:782.7px;width:19px;height:19px;background:#c6c6c6;border-radius:3px"></div>
<svg style="left:1143.5px;top:785.6px" width="13" height="13" viewBox="0 0 13 13"><path d="M1 1H4L5.5 2.5V12H1ZM7.5 1H10.5L12 2.5V12H7.5Z" fill="none" stroke="#333" stroke-width="1.1" stroke-linecap="round" stroke-linejoin="round"/></svg>
<div class="a" style="left:1179px;top:786px;width:13.2px;height:12.8px;background:#e0535e;border-radius:2px"></div>
<div class="a" style="left:1183.6px;top:788.8px;border-top:3.6px solid transparent;border-bottom:3.6px solid transparent;border-left:5.4px solid #fff"></div>
<div class="a" style="left:1212px;top:782.7px;width:19px;height:19px;background:#c6c6c6;border-radius:3px"></div>
<svg style="left:1216px;top:785.6px" width="12" height="13" viewBox="0 0 12 13"><path d="M1 1H8.5L11 3V12H1Z" fill="none" stroke="#333" stroke-width="1.1" stroke-linecap="round" stroke-linejoin="round"/><path d="M3.5 6V10M8 6V10M5.8 7V7.1M5.8 9.5V9.6" fill="none" stroke="#444" stroke-width="0.92" stroke-linecap="round" stroke-linejoin="round"/></svg>
<svg style="left:1236.5px;top:785.6px" width="12" height="13" viewBox="0 0 12 13"><path d="M1 1H8.5L11 3V12H1Z" fill="none" stroke="#333" stroke-width="1.1" stroke-linecap="round" stroke-linejoin="round"/><circle cx="6" cy="6.8" r="2.8" fill="none" stroke="#444" stroke-width="1" stroke-dasharray="2.2 2.2"/></svg>
<svg style="left:1256.5px;top:785.6px" width="12" height="13" viewBox="0 0 12 13"><path d="M1 1H8.5L11 3V12H1Z" fill="none" stroke="#333" stroke-width="1.1" stroke-linecap="round" stroke-linejoin="round"/><path d="M4.5 5L3 6.5L4.5 8" fill="none" stroke="#444" stroke-width="0.92" stroke-linecap="round" stroke-linejoin="round"/></svg>
<!-- Sogou IME bar -->
<div class="a" style="left:922px;top:788.4px;width:149.5px;height:20px;background:#fff;border:1px solid #d4d4d4;border-left:0"></div>
<div class="a" style="left:906.6px;top:785.6px;width:23px;height:21px;background:#ee5a24;border-radius:5px;transform:skewX(-4deg) rotate(-7deg)"></div>
<div class="t" style="left:910.6px;top:786.4px;font-size:19px;color:#fff;line-height:20px;height:20px;font-weight:bold;transform:rotate(-9deg)">S</div>
<div class="t" style="left:933px;top:789.6px;font-size:12.4px;color:#1a72cc;letter-spacing:0.21px;font-weight:bold">中</div>
<div class="a" style="left:952.4px;top:793.6px;width:3.8px;height:3.8px;background:#fff;border:1.2px solid #1a72cc;border-radius:2px"></div>
<svg style="left:957px;top:797px" width="5" height="6" viewBox="0 0 5 6"><path d="M2.6 .8C3.8 1.6 3.4 3.6 1.2 4.8" fill="none" stroke="#1a72cc" stroke-width="1.75" stroke-linecap="round" stroke-linejoin="round"/></svg>
<svg style="left:967.5px;top:790.8px" width="14" height="14" viewBox="0 0 14 14"><circle cx="7" cy="7" r="5.8" fill="none" stroke="#1a72cc" stroke-width="1.4"/><path d="M4.4 8.4C5.4 10.2 8.6 10.2 9.6 8.4M5 5.4V5.6M9 5.4V5.6" fill="none" stroke="#1a72cc" stroke-width="1.2" stroke-linecap="round" stroke-linejoin="round"/></svg>
<svg style="left:987.4px;top:791.4px" width="10" height="13" viewBox="0 0 10 13"><rect x="3" y="0" width="4" height="8" rx="2" fill="#1a72cc"/><path d="M1.2 5.6C1.2 10.6 8.8 10.6 8.8 5.6M5 9.6V12M2.8 12H7.2" fill="none" stroke="#1a72cc" stroke-width="1.2" stroke-linecap="round" stroke-linejoin="round"/></svg>
<svg style="left:1002.6px;top:793px" width="14" height="10" viewBox="0 0 14 10"><rect x=".7" y=".7" width="12.6" height="8.6" rx="1" fill="#1a72cc"/><path d="M2.5 3H11.5M2.5 5H11.5" stroke="#fff" stroke-width="1" stroke-dasharray="1.2 1"/><path d="M4 7.3H10" stroke="#fff" stroke-width="1"/></svg>
<svg style="left:1022.4px;top:791px" width="13" height="14" viewBox="0 0 13 14"><circle cx="5.6" cy="3.4" r="2.8" fill="#b9bec6"/><path d="M.6 12.6C.6 7.6 10.6 7.6 10.6 12.6Z" fill="#b9bec6"/><rect x="7.6" y="8.6" width="4.6" height="4" fill="#fff" stroke="#b9bec6"/></svg>
<svg style="left:1038.6px;top:792px" width="13" height="13" viewBox="0 0 13 13"><path d="M3.6 .5L0 3.4L1.8 5.8L3.2 4.8V12H9.6V4.8L11 5.8L12.8 3.4L9.2 .5C8.2 2.4 4.6 2.4 3.6 .5Z" fill="#1a72cc"/></svg>
<svg style="left:1056.4px;top:792.4px" width="11" height="12" viewBox="0 0 11 12"><rect x="0" y="0" width="4.8" height="5" fill="#1a72cc"/><rect x="6" y="0" width="4.8" height="5" fill="#1a72cc"/><rect x="0" y="6.4" width="4.8" height="5" fill="#1a72cc"/><rect x="6" y="6.4" width="4.8" height="5" fill="#1a72cc"/></svg>
<!-- ===== transfer popup ===== -->
<div class="a" style="left:1262px;top:723.4px;width:240px;height:71.8px;background:#fff"></div>
<div class="a" style="left:1262px;top:719.4px;width:240px;height:4px;background:linear-gradient(rgba(255,255,255,0),#fff)"></div>
<svg style="left:1280.2px;top:741.2px" width="17.4" height="17.4" viewBox="0 0 17.4 17.4"><circle cx="8.7" cy="8.7" r="7.8" fill="none" stroke="#4a86e0" stroke-width="1.3"/><path d="M8.7 12.2V5.6M6.2 8L8.7 5.4L11.2 8" fill="none" stroke="#4a86e0" stroke-width="1.38" stroke-linecap="round" stroke-linejoin="round"/></svg>
<div class="t" style="left:1304px;top:740.2px;font-size:14.2px;color:#222;line-height:20px;height:20px;letter-spacing:0.06px">传输详情</div>
<div class="t" style="left:1280px;top:766.8px;font-size:9.4px;color:#555;letter-spacing:0.06px">正在上传文件</div>
<div class="t" style="left:1347px;top:766.8px;font-size:9.4px;color:#2f7be0;text-decoration:underline;text-underline-offset:1px">查看</div>
<svg style="left:1385px;top:767.6px" width="13" height="13" viewBox="0 0 13 13"><circle cx="6.5" cy="6.5" r="1.9" fill="none" stroke="#a8a8a8" stroke-width="1"/><circle cx="6.5" cy="6.5" r="4.3" fill="none" stroke="#a8a8a8" stroke-width="1"/><circle cx="6.5" cy="6.5" r="5.4" fill="none" stroke="#a8a8a8" stroke-width="1.4" stroke-dasharray="2.1 2.14"/></svg>
<svg style="left:1481px;top:735.5px" width="10" height="10" viewBox="0 0 10 10"><path d="M.5 .5L9.5 9.5M9.5 .5L.5 9.5" fill="none" stroke="#b0b0b0" stroke-width="0.92" stroke-linecap="round" stroke-linejoin="round"/></svg>
<!-- ===== tooltip ===== -->
<div class="a" style="left:200.4px;top:185.3px;width:53.6px;height:21.8px;background:#fff;border:1px solid #9a9a9a;box-shadow:2px 2px 1.5px rgba(0,0,0,.35)"></div>
<div class="t" style="left:207.7px;top:188.5px;font-size:9.6px;color:#555;letter-spacing:-0.07px">如何使用</div>
<!-- ===== red annotation arrows ===== -->
<svg style="left:0;top:0" width="1500" height="805"><path d="M682.0 189.0L824.7 245.1L822.8 247.5L837.1 246.2L827.0 235.9L826.9 239.0Z" fill="#ee343c"/><path d="M311.0 286.5L227.1 337.6L226.4 334.7L219.2 346.5L232.9 344.6L230.5 342.8Z" fill="#ee343c"/></svg>
</div>
</body>
</html>
